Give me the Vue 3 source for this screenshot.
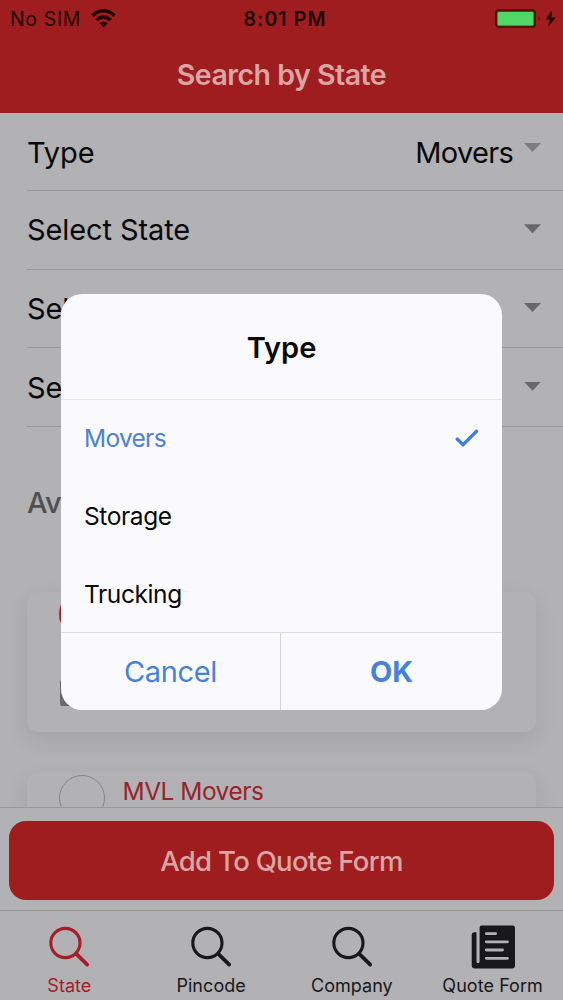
<template>
  <div class="screen">
    <header class="header">
      <div class="status">
        <div class="carrier">
          <span class="no-sim">No SIM</span>
          <svg class="wifi" width="25" height="19" viewBox="0 0 25 19">
            <g fill="none" stroke="#210305" stroke-width="3.4">
              <path d="M1.4 6.6 Q12.5 -3 23.6 6.6" />
              <path d="M5.4 11 Q12.5 5 19.6 11" />
            </g>
            <path d="M8.4 14.2 Q12.5 10.9 16.6 14.2 L12.5 18.4 Z" fill="#210305" />
          </svg>
        </div>
        <span class="time">8:01 PM</span>
        <div class="power">
          <svg width="62" height="20" viewBox="0 0 62 20">
            <rect x="0.9" y="1" width="39.2" height="17" rx="3" fill="#9f1d1f" stroke="#4d1608" stroke-width="1.8" />
            <rect x="2.6" y="3" width="35.8" height="13.5" rx="1" fill="#4fd964" />
            <path d="M43.6 6.8 q2.2 2.6 0 5.2 Z" fill="#4d0c0c" />
            <path d="M57 1.6 L50.6 10.6 H55 L53.2 17.8 L60.8 8.4 H56.3 Z" fill="#210305" />
          </svg>
        </div>
      </div>
      <h1 class="title"><span>Search by State</span></h1>
    </header>

    <main class="content">
      <div v-for="(field, i) in fields" :key="i" class="field" :class="{ filled: field.value }">
        <span class="label">{{ field.label }}</span>
        <span v-if="field.value" class="value">{{ field.value }}</span>
        <i class="caret"></i>
      </div>

      <h2 class="available">Av</h2>

      <div class="card first">
        <div class="avatar red"></div>
        <div class="box"></div>
      </div>
      <div class="card">
        <div class="avatar"></div>
        <span class="company">MVL Movers</span>
      </div>
    </main>

    <div class="action">
      <button class="add"><span>Add To Quote Form</span></button>
    </div>

    <nav class="tabs">
      <div v-for="tab in tabs" :key="tab.name" class="tab" :class="{ active: tab.name === activeTab }">
        <svg v-if="tab.icon === 'search'" width="44" height="44" viewBox="0 0 44 44">
          <circle cx="18.4" cy="18" r="14.6" fill="none" stroke="currentColor" stroke-width="3.1" />
          <path d="M29 28.6 L40.2 39.6" stroke="currentColor" stroke-width="3.7" stroke-linecap="round" />
        </svg>
        <svg v-else width="44" height="44" viewBox="0 0 44 44">
          <path
            d="M10.5 0.5 H41.5 Q44 0.5 44 3 V40.5 Q44 43.5 41 43.5 H4 Q0.7 43.5 0.7 40 V10.2 Q0.7 7.2 3.7 7.2 H5.5 V36.5 Q5.5 38.3 7 38.3 Q8.6 38.3 8.6 36.5 V2.5 Q8.6 0.5 10.5 0.5 Z"
            fill="currentColor"
          />
          <path d="M15.3 8.6 H24.7 M15.3 16.8 H36.5 M15.3 25 H31.5 M15.3 33.3 H36.5" stroke="#b2b1b3" stroke-width="2.8" stroke-linecap="round" />
        </svg>
        <span>{{ tab.name }}</span>
      </div>
    </nav>

    <div class="dialog" role="dialog">
      <h2 class="dialog-title"><span>Type</span></h2>
      <ul class="options">
        <li v-for="option in options" :key="option" :class="{ checked: option === selected }" @click="selected = option">
          <span>{{ option }}</span>
          <svg v-if="option === selected" width="24" height="20" viewBox="0 0 24 20">
            <path d="M2.2 11 L8 16.6 L21.6 3.2" fill="none" stroke="#3f7ede" stroke-width="3.3" stroke-linecap="round" />
          </svg>
        </li>
      </ul>
      <div class="buttons">
        <button class="cancel"><span>Cancel</span></button>
        <button class="ok"><span>OK</span></button>
      </div>
    </div>
  </div>
</template>

<script setup>
import { ref } from 'vue'

const fields = [
  { label: 'Type', value: 'Movers' },
  { label: 'Select State' },
  { label: 'Sel' },
  { label: 'Se' },
]

const options = ['Movers', 'Storage', 'Trucking']
const selected = ref('Movers')

const tabs = [
  { name: 'State', icon: 'search' },
  { name: 'Pincode', icon: 'search' },
  { name: 'Company', icon: 'search' },
  { name: 'Quote Form', icon: 'form' },
]
const activeTab = ref('State')
</script>

<style>
body { margin: 0; background: #b2b1b3; }
</style>

<style scoped>
* { box-sizing: border-box; }

.screen {
  position: relative;
  display: flex;
  flex-direction: column;
  width: 563px;
  height: 1000px;
  overflow: hidden;
  background: #b2b1b3;
  color: #09090a;
  font-family: Inter, "Liberation Sans", sans-serif;
  white-space: nowrap;
}
h1, h2, ul { margin: 0; padding: 0; list-style: none; }
button { padding: 0; border: 0; background: none; font-family: inherit; }

.header { height: 113px; flex: none; background: #9f1d1f; }
.status {
  display: grid;
  grid-template-columns: 1fr auto 1fr;
  align-items: center;
  height: 37px;
  padding: 0 6px 0 10px;
  color: #210305;
}
.carrier { display: flex; align-items: center; gap: 10px; }
.no-sim { font-size: 19.5px; letter-spacing: .65px; }
.time { padding-left: 3px; font-size: 19.5px; font-weight: 600; letter-spacing: 1.1px; }
.power { display: flex; justify-content: flex-end; }
.title {
  height: 76px;
  line-height: 75px;
  text-align: center;
  font-size: 28.5px;
  font-weight: 600;
  letter-spacing: -.5px;
  color: #dba5a4;
}

.content { flex: none; height: 694px; overflow: hidden; }
.field {
  display: flex;
  align-items: center;
  height: 78.7px;
  margin-left: 27px;
  padding-right: 22px;
  border-bottom: 1px solid #979698;
  font-size: 29px;
}
.field:first-child { height: 78px; padding-top: 1px; }
.label { flex: 1; letter-spacing: -.1px; }
.value { margin-right: 11px; letter-spacing: -.7px; }
.caret {
  width: 17px;
  height: 9px;
  margin-bottom: 2px;
  background: #68676a;
  clip-path: polygon(0 0, 100% 0, 50% 100%);
}
.filled .caret { margin-bottom: 9px; background: #7d7c7f; }
.available {
  margin: 57px 0 0 27px;
  height: 38px;
  line-height: 38px;
  font-size: 29px;
  font-weight: 500;
  letter-spacing: -.5px;
  color: #505051;
}
.card {
  display: flex;
  width: 509px;
  height: 140px;
  margin: 40px 0 0 27px;
  padding: 3px 0 0 32px;
  border-radius: 11px;
  background: #b2b1b3;
  box-shadow: 0 8px 22px rgba(0, 0, 0, .09);
}
.card.first { flex-direction: column; gap: 43px; margin-top: 70px; padding: 0 0 0 32px; }
.avatar { width: 46px; height: 46px; border: 1.5px solid #858486; border-radius: 50%; flex: none; }
.avatar.red { margin: -1px 0 0; border: 3px solid #a32427; }
.box { width: 24px; height: 26px; border-radius: 2px; background: #69686a; margin-left: 1px; }
.company { margin-left: 17.5px; line-height: 32px; font-size: 24.5px; letter-spacing: -.5px; color: #98232d; }

.action { flex: none; height: 103px; padding: 13px 9px 0; border-top: 1.5px solid #99999a; }
.add {
  display: block;
  width: 545px;
  height: 79px;
  border-radius: 17px;
  background: #9f1d1f;
  color: #dba5a4;
  font-size: 27.5px;
  font-weight: 500;
  letter-spacing: -.7px;
}

.tabs { flex: 1; display: grid; grid-template-columns: repeat(4, 1fr); border-top: 1.5px solid #959496; color: #18181c; }
.tab { display: flex; flex-direction: column; align-items: center; padding: 14px 0 0; }
.tab.active { padding-right: 2px; color: #a41e29; }
.tab span { margin-top: 6px; line-height: 22px; font-size: 18px; letter-spacing: .05px; }

.dialog {
  position: absolute;
  top: 294px;
  left: 61px;
  width: 441px;
  height: 416px;
  display: flex;
  flex-direction: column;
  border-radius: 21px;
  background: #faf9fc;
  overflow: hidden;
}
.dialog-title { height: 106px; line-height: 107px; text-align: center; font-size: 29px; font-weight: 600; border-bottom: 1.5px solid #e7e6e9; }
.options { flex: 1; }
.options li {
  display: flex;
  align-items: center;
  justify-content: space-between;
  height: 77.7px;
  padding: 0 23px;
  font-size: 24.5px;
  letter-spacing: -.4px;
}
.options .checked { height: 77px; padding-bottom: 1px; color: #4c83cf; letter-spacing: -.7px; }
.buttons { flex: none; display: flex; height: 78px; border-top: 1.5px solid #dedde0; }
.buttons button { flex: 1; color: #4682d8; font-size: 29px; line-height: 76px; }
.buttons .cancel { flex: none; width: 220px; border-right: 1.5px solid #d6d5d8; letter-spacing: -.35px; }
.buttons .ok { font-weight: 700; }
</style>
